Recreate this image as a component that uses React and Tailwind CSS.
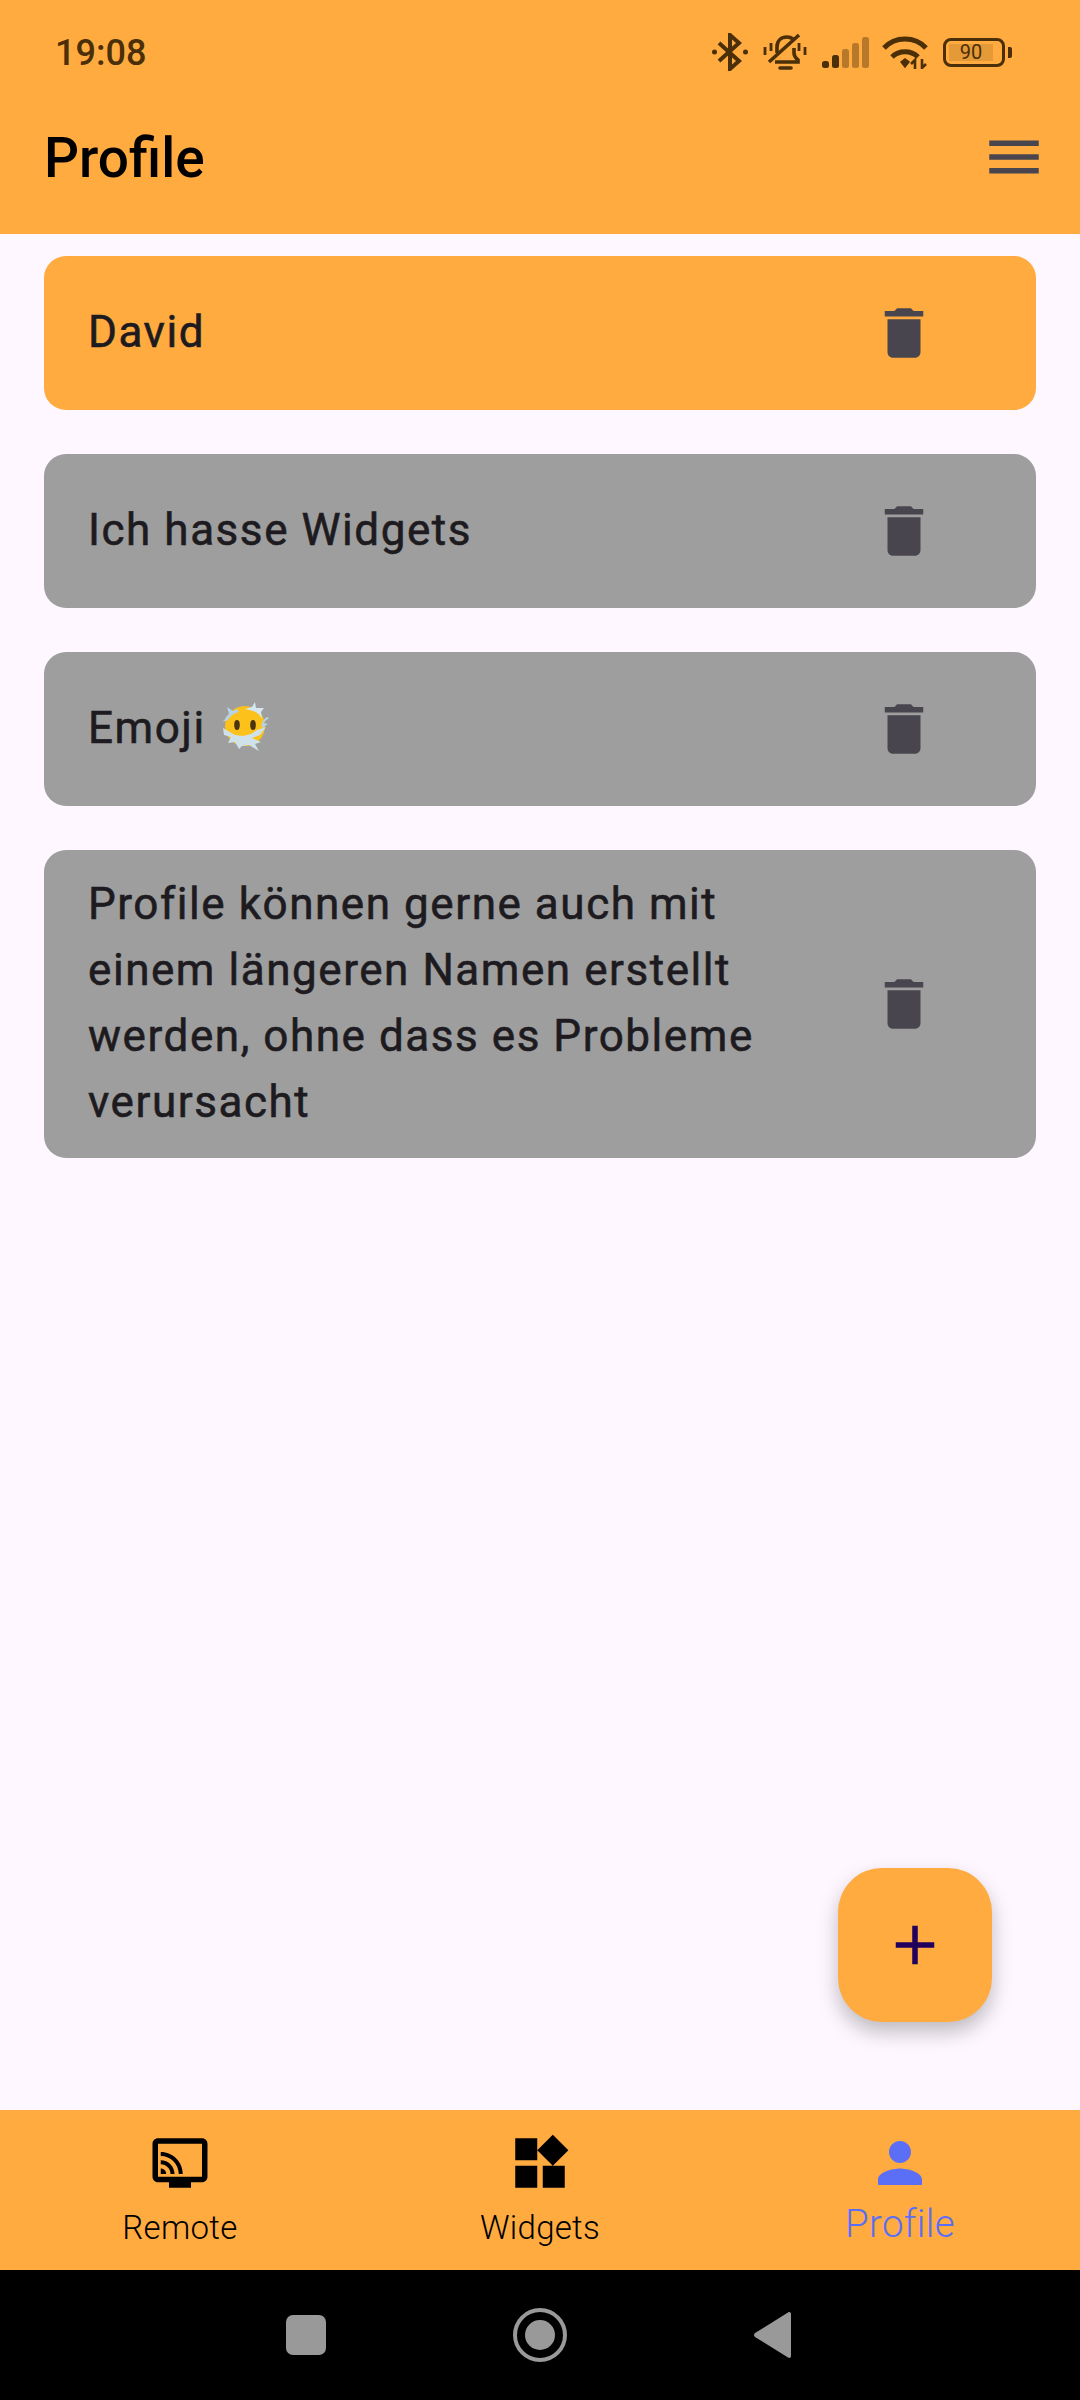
const TrashIcon = () => (
  <svg viewBox="0 0 24 24" className="w-[66px] h-[66px] shrink-0 fill-[#49454f]">
    <path d="M6 19c0 1.1.9 2 2 2h8c1.1 0 2-.9 2-2V7H6v12zM19 4h-3.5l-1-1h-5l-1 1H5v2h14V4z" />
  </svg>
);

const EmojiFog = () => (
  <svg viewBox="0 0 48 50" className="inline-block w-[48px] h-[50px] ml-[15px] align-[-9px]">
    <circle cx="24" cy="24" r="20" fill="#fcc21b" />
    <ellipse cx="16" cy="23" rx="2.8" ry="5" fill="#4a3410" />
    <ellipse cx="32" cy="23" rx="2.8" ry="5" fill="#4a3410" />
    <path d="M6 5l6 4 4-2 2 3c-5 1-9 4-11 8L1 20c2-1 3-3 4-5l3-3z" fill="#b5d3e2" />
    <path d="M24 7l7-2 3-5 1 6 8 0-3 4 1 7c-2-4-5-7-9-8-3-1-5-1-8-2z" fill="#d4e6ee" />
    <path d="M46 15l2 1-6 5 5 1-6 4c-1-3-1-7 5-11z" fill="#b5d3e2" />
    <path d="M2 26l5 3 7 4 8 1 8-2 6-4 9-3-6 8-8 3 9 4-6 2 4 7-10-6-7 1-3 3-4-7-7 1 3-6-7-2z" fill="#cfe2ea" />
  </svg>
);

const StatusIcons = () => (
  <div className="flex items-center">
    {/* bluetooth */}
    <svg viewBox="0 0 36 38" className="w-[36px] h-[38px] fill-none stroke-[#4a2f08]" strokeWidth="4">
      <path d="M7 10l20 18-9 8V2l9 8L7 28" />
      <circle cx="2.500" cy="19" r="2.500" className="fill-[#4a2f08] stroke-none" />
      <circle cx="33.500" cy="19" r="2.500" className="fill-[#4a2f08] stroke-none" />
    </svg>
    {/* vibrate off bell */}
    <svg viewBox="0 0 44 38" className="ml-[15px] w-[44px] h-[38px] fill-none stroke-[#4a2f08]" strokeWidth="3.6">
      <path d="M14 20v-6c0-6 4-10 10-10 2.500 0 4 .5 6 2" />
      <path d="M31 15v5c0 3 1.500 5 4 7v2H12" />
      <path d="M36 2L6 29" />
      <path d="M2 14v8M8 10v8M36 10v8M42 14v8" strokeWidth="2.800" />
      <path d="M17 35h11" strokeWidth="3.600" strokeLinecap="round" />
    </svg>
    {/* signal */}
    <svg viewBox="0 0 47 31" className="ml-[15px] w-[47px] h-[31px]">
      <rect x="0" y="24" width="7" height="7" rx="2.500" fill="#4a2f08" />
      <rect x="10" y="18" width="7" height="13" rx="2.500" fill="#4a2f08" />
      <rect x="20" y="12" width="7" height="19" rx="2.500" fill="#4a2f08" fillOpacity="0.4" />
      <rect x="30" y="6" width="7" height="25" rx="2.500" fill="#4a2f08" fillOpacity="0.4" />
      <rect x="40" y="0" width="7" height="31" rx="2.500" fill="#4a2f08" fillOpacity="0.4" />
    </svg>
    {/* wifi */}
    <svg viewBox="0 0 46 33" className="ml-[13px] w-[46px] h-[33px] fill-none stroke-[#4a2f08]" strokeWidth="5">
      <path d="M2 12C13 0 33 0 44 12" />
      <path d="M10 21c7-7 19-7 26 0" />
      <path d="M19 26l4-3 4 3-4 5z" className="fill-[#4a2f08]" strokeWidth="1.500" />
      <path d="M33 33v-9l-4 4M40 23v9l4-4" strokeWidth="2.600" />
    </svg>
    {/* battery */}
    <div className="ml-[15px] flex items-center">
      <div className="w-[62px] h-[29px] rounded-[8px] border-[3px] border-[#4a2f08] p-[3px]">
        <div className="w-[44px] h-full bg-[#e59a38] flex items-center justify-center text-[20px] leading-none text-[#4a2f08]">
          90
        </div>
      </div>
      <div className="ml-[3px] w-[4px] h-[11px] rounded-r-[2px] bg-[#4a2f08]" />
    </div>
  </div>
);

const profiles = [
  { id: 1, name: "David", active: true },
  { id: 2, name: "Ich hasse Widgets" },
  { id: 3, name: "Emoji", emoji: true },
  {
    id: 4,
    name: "Profile können gerne auch mit einem längeren Namen erstellt werden, ohne dass es Probleme verursacht",
  },
];

const ProfileCard = ({ profile }) => (
  <div
    className={`flex items-center min-h-[154px] rounded-[22px] py-[22px] pl-[44px] pr-[99px] justify-between ${
      profile.active ? "bg-[#ffab40]" : "bg-[#9e9e9e]"
    }`}
  >
    <div className="w-[700px] pb-[1px] -mt-[1px] text-[44px] leading-[66px] tracking-[1.55px] text-[#1d1b20] [-webkit-text-stroke:0.6px_#1d1b20]">
      {profile.name}
      {profile.emoji && <EmojiFog />}
    </div>
    <TrashIcon />
  </div>
);

const NavItem = ({ label, active, path }) => (
  <div className={`flex-1 flex flex-col items-center ${active ? "text-[#5a6ff5]" : "text-black"}`}>
    <svg viewBox="0 0 24 24" className="w-[66px] h-[66px] fill-current">
      <path d={path} />
    </svg>
    <span
      className={
        active
          ? "text-[38.5px] leading-[45px] mt-[5px] font-light tracking-[0.3px]"
          : "text-[33px] leading-[39px] mt-[12px] font-light tracking-[0.3px]"
      }
    >
      {label}
    </span>
  </div>
);

export default function App() {
  return (
    <div className="w-[1080px] h-[2400px] flex flex-col bg-[#fef7ff] font-['Roboto',sans-serif] overflow-hidden">
      <header className="bg-[#ffab40] h-[234px] shrink-0">
        <div className="h-[80px] pl-[55px] pr-[68px] pt-[24px] flex items-center justify-between">
          <span className="mt-[2px] text-[36px] font-medium text-[#4a2f08]">19:08</span>
          <StatusIcons />
        </div>
        <div className="h-[154px] pl-[44px] pr-[33px] pt-[3px] flex items-center justify-between">
          <h1 className="text-[55px] font-medium text-black">Profile</h1>
          <svg viewBox="0 0 24 24" className="w-[66px] h-[66px] -mt-[3px] fill-[#49454f]">
            <path d="M3 18h18v-2H3v2zm0-5h18v-2H3v2zm0-7v2h18V6H3z" />
          </svg>
        </div>
      </header>

      <main className="relative flex-1 px-[44px] pt-[22px] flex flex-col gap-[44px]">
        {profiles.map((profile) => (
          <ProfileCard key={profile.id} profile={profile} />
        ))}
        <button className="absolute right-[88px] bottom-[88px] w-[154px] h-[154px] rounded-[44px] bg-[#ffab40] flex items-center justify-center shadow-[0_10px_20px_rgba(0,0,0,0.25)]">
          <svg viewBox="0 0 24 24" className="w-[66px] h-[66px] fill-[#21005d]">
            <path d="M19 13h-6v6h-2v-6H5v-2h6V5h2v6h6v2z" />
          </svg>
        </button>
      </main>

      <nav className="bg-[#ffab40] h-[160px] shrink-0 flex pt-[20px]">
        <NavItem
          label="Remote"
          path="M20 3H4c-1.100 0-2 .9-2 2v12c0 1.100.9 2 2 2h4v2h8v-2h4c1.100 0 1.990-.9 1.990-2L22 5c0-1.100-.9-2-2-2zm0 14H4V5h16v12zM5 14v2h2c0-1.110-.89-2-2-2zm0-3v1.430c1.970 0 3.570 1.600 3.570 3.570H10c0-2.760-2.240-5-5-5zm0-3v1.450c3.610 0 6.550 2.930 6.550 6.550H13c0-4.420-3.590-8-8-8z"
        />
        <NavItem
          label="Widgets"
          path="M13 13v8h8v-8h-8zM3 21h8v-8H3v8zM3 3v8h8V3H3zm13.660-1.310L11 7.340 16.660 13l5.660-5.660-5.660-5.650z"
        />
        <NavItem
          label="Profile"
          active
          path="M12 12c2.210 0 4-1.790 4-4s-1.790-4-4-4-4 1.790-4 4 1.790 4 4 4zm0 2c-2.670 0-8 1.340-8 4v2h16v-2c0-2.660-5.330-4-8-4z"
        />
      </nav>

      <div className="bg-black h-[130px] shrink-0 flex items-center justify-center gap-[187px] pr-[3px]">
        <div className="w-[40px] h-[40px] rounded-[7px] bg-[#999999]" />
        <div className="w-[54px] h-[54px] rounded-full border-[4px] border-[#999999] flex items-center justify-center">
          <div className="w-[30px] h-[30px] rounded-full bg-[#999999]" />
        </div>
        <svg viewBox="0 0 37 46" className="w-[37px] h-[46px] fill-[#999999]">
          <path d="M34 .5c1.500-1 3-.2 3 1.500v42c0 1.700-1.500 2.500-3 1.500L1 25c-1.300-1-1.300-3 0-4z" />
        </svg>
      </div>
    </div>
  );
}
